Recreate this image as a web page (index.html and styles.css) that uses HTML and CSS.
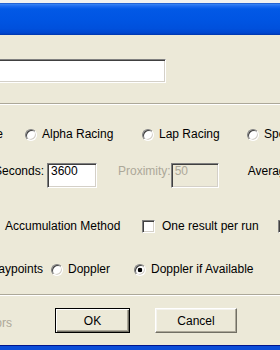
FILE: index.html
```html
<html>
<head>
<meta charset="utf-8"/>
<title>Race Options</title>
<link rel="stylesheet" href="styles.css">
</head>
<body>

<div class="desktop"></div>
<div class="titlebar"></div>

<div class="dialog">
	<div class="namerow"><div class="textbox wide"></div></div>
	<div class="etched"></div>

	<!-- race type -->
	<div class="row r1">
		<span class="lead w3"><span>Drag Race</span></span>
		<label class="opt o1"><i class="radio"></i>Alpha Racing</label>
		<label class="opt o2"><i class="radio"></i>Lap Racing</label>
		<label class="opt"><i class="radio"></i>Speed Trap</label>
	</div>

	<!-- timing -->
	<div class="row r2">
		<span class="lead w44"><span>Seconds:</span></span>
		<div class="textbox small">3600</div>
		<span class="dim prox">Proximity:</span>
		<div class="textbox small off">50</div>
		<span class="avg">Average Speed</span>
	</div>

	<!-- accumulation -->
	<div class="row r3">
		<span class="accum">Accumulation Method</span>
		<label class="opt o3"><i class="check"></i>One result per run</label>
		<label class="opt"><i class="check"></i>Split</label>
	</div>

	<!-- speed source -->
	<div class="row r4">
		<span class="lead w43"><span>Waypoints</span></span>
		<label class="opt o4"><i class="radio"></i>Doppler</label>
		<label class="opt"><i class="radio on"></i>Doppler if Available</label>
	</div>

	<div class="etched e2"></div>

	<div class="row buttons">
		<span class="lead w12 dim low"><span>Colors</span></span>
		<div class="btn default">OK</div>
		<div class="btn cancel">Cancel</div>
	</div>
</div>

<div class="frame-bottom"></div>

</body>
</html>
```

FILE: styles.css
```css
body {
	margin: 0px;
	width: 280px;
	height: 350px;
	overflow: hidden;
	background: #ece9d8;
	color: black;
	font: 12px "Liberation Sans", Arial, sans-serif;
}
/* window chrome */
.desktop {
	height: 3px;
	background: #f2f2f0;
}
.titlebar {
	height: 32px;
	background: linear-gradient(#0b3fb5 0px, #3a86f4 1px, #1d6bef 3px, #0259e6 6px, #0055e3 50%, #0050dc 80%, #0046cf 94%, #0035aa 100%);
}
.frame-bottom {
	margin-top: 12px;
	height: 4px;
	border-top: 1px solid #00158c;
	background: #0b4dd8;
}
/* controls */
.namerow {
	padding-top: 24px;
}
.textbox {
	box-sizing: border-box;
	flex: none;
	height: 24px;
	background: white;
	border: 1px solid;
	border-color: #808080 white white #808080;
	box-shadow: inset 1px 1px 0 #404040, inset -1px -1px 0 #d4d0c8;
}
.textbox.wide {
	width: 170px;
	margin-left: -4px;
}
.textbox.small {
	width: 50px;
	height: 25px;
	padding: 2px 0px 0px 3px;
	line-height: 10px;
	margin-left: 3px;
}
.textbox.off {
	width: 48px;
	margin-left: 0px;
	background: #ece9d8;
	color: #aca899;
}
.etched {
	margin-top: 20px;
	border-top: 1px solid #aca899;
	border-bottom: 1px solid white;
}
.etched.e2 {
	margin-top: 15px;
}
.radio {
	flex: none;
	box-sizing: border-box;
	width: 12px;
	height: 12px;
	border-radius: 50%;
	background: white;
	border: 1px solid;
	border-color: #808080 white white #808080;
	box-shadow: inset 1px 1px 0 #404040, inset -1px -1px 0 #d4d0c8;
	margin-top: 2px;
}
.radio.on {
	background: radial-gradient(circle, black 0px, black 2px, white 2.6px);
}
.check {
	flex: none;
	box-sizing: border-box;
	width: 13px;
	height: 13px;
	margin-right: 2px;
	background: white;
	border: 1px solid;
	border-color: #808080 white white #808080;
	box-shadow: inset 1px 1px 0 #404040, inset -1px -1px 0 #d4d0c8;
}
/* rows */
.row {
	display: flex;
	align-items: center;
	white-space: nowrap;
}
.r1 {
	margin-top: 19px;
	height: 20px;
}
.r2 {
	margin-top: 19px;
	height: 25px;
	align-items: baseline;
}
.r3 {
	margin-top: 28px;
	height: 20px;
}
.r4 {
	margin-top: 23px;
	height: 20px;
}
.lead {
	flex: none;
	display: flex;
	justify-content: flex-end;
}
.w3 { width: 3px; }
.w12 { width: 12px; }
.w43 { width: 43px; }
.w44 { width: 44px; }
.opt {
	flex: none;
	display: flex;
	align-items: center;
	gap: 5px;
}
.r1 .o1 { margin-left: 22px; width: 117px; }
.r1 .o2 { width: 105px; }
.r3 .o3 { width: 136px; }
.r4 .o4 { margin-left: 8px; width: 83px; }
.dim {
	color: #aca899;
}
.prox {
	width: 57px;
	margin-left: 21px;
}
.avg {
	margin-left: 29px;
}
.accum {
	flex: none;
	width: 137px;
	margin-left: 5px;
}
/* buttons */
.buttons {
	margin-top: 12px;
	height: 25px;
}
.low {
	padding-top: 4px;
}
.btn {
	box-sizing: border-box;
	flex: none;
	height: 25px;
	display: flex;
	align-items: center;
	justify-content: center;
	background: #ece9d8;
	border: 1px solid;
	border-color: white #716f64 #716f64 white;
	box-shadow: inset -1px -1px 0 #aca899, inset 1px 1px 0 #f4f3ee;
}
.btn.default {
	width: 75px;
	margin-left: 43px;
	border: 1px solid black;
	box-shadow: inset 1px 1px 0 white, inset -1px -1px 0 #716f64, inset -2px -2px 0 #aca899;
}
.btn.cancel {
	width: 82px;
	margin-left: 25px;
}
```
